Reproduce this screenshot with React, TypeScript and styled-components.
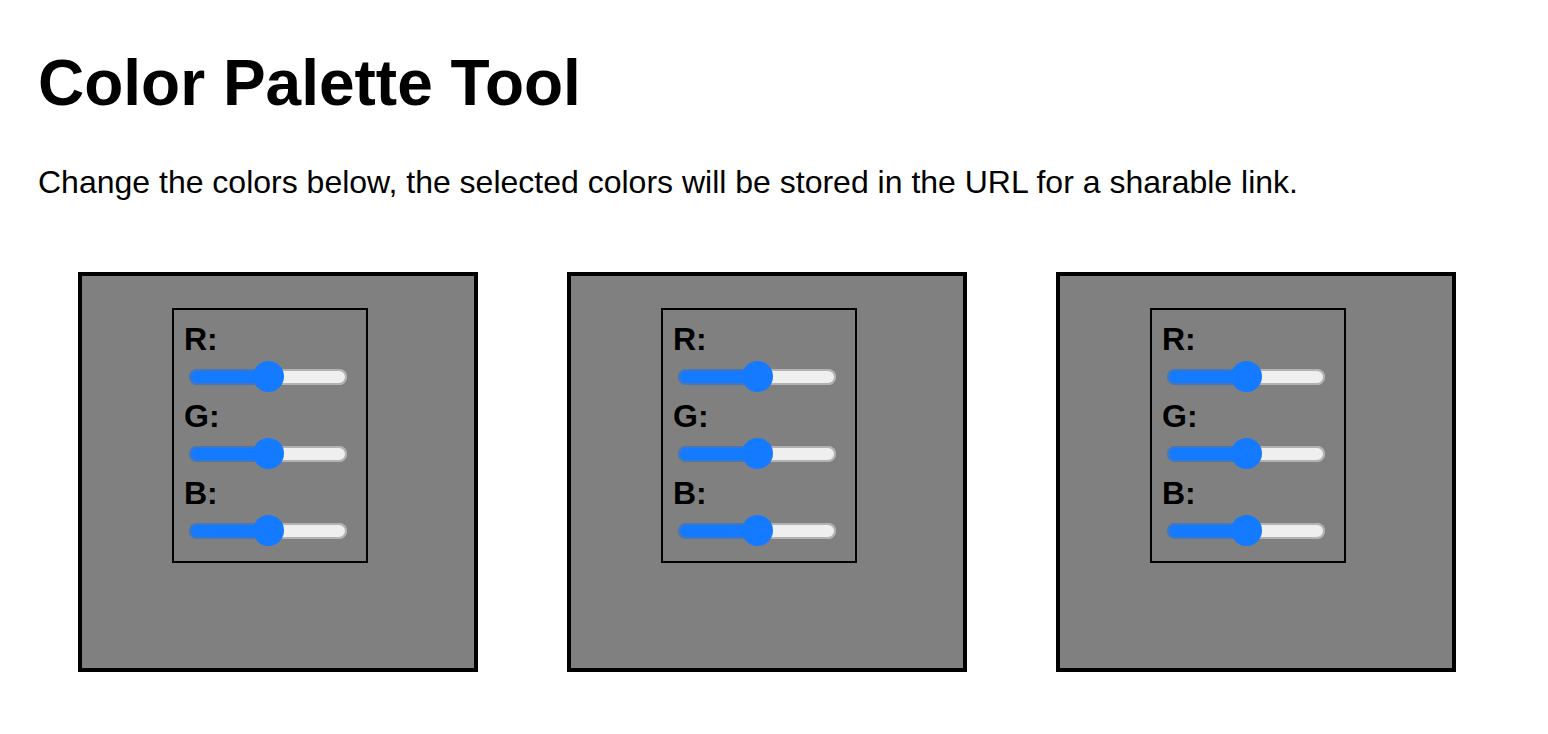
import React, { useState } from "react";
import styled, { createGlobalStyle } from "styled-components";

const GlobalStyle = createGlobalStyle`
  *, *::before, *::after { box-sizing: border-box; }
  body {
    margin: 0;
    background: #fff;
    color: #000;
    font-family: "Liberation Sans", Arial, sans-serif;
    font-size: 32px;
    line-height: 36px;
  }
`;

const Page = styled.main`
  padding: 46px 38px 62px;
`;

const Title = styled.h1`
  margin: 0;
  font-size: 64px;
  line-height: 74px;
  font-weight: 700;
`;

const Intro = styled.p`
  margin: 44px 0 0;
`;

const Palette = styled.section`
  display: flex;
  flex-wrap: wrap;
  gap: 89px;
  margin-top: 72px;
  padding-left: 40px;
`;

const Swatch = styled.article`
  display: flex;
  justify-content: center;
  align-items: flex-start;
  width: 400px;
  height: 400px;
  padding: 32px 16px 0 0;
  border: 4px solid #000;
`;

const Controls = styled.div`
  width: 196px;
  padding: 11px 10px 9px;
  border: 2px solid #000;
`;

const Channel = styled.label`
  display: block;
  height: 77px;
  font-weight: 700;
`;

const Slider = styled.input<{ $fill: number }>`
  appearance: none;
  display: block;
  width: 158px;
  height: 32px;
  margin: 4px 5px;
  background: transparent;

  &::-webkit-slider-runnable-track {
    height: 16px;
    border-radius: 8px;
    box-shadow: inset 0 0 0 2px rgba(117, 117, 117, 0.5);
    background: linear-gradient(
      to right,
      #147aff ${(p) => p.$fill}%,
      #efefef ${(p) => p.$fill}%
    );
  }

  &::-webkit-slider-thumb {
    appearance: none;
    width: 31px;
    height: 31px;
    margin-top: -8px;
    border-radius: 50%;
    background: #147aff;
  }
`;

const channels = ["R", "G", "B"] as const;

function ColorSwatch({ index }: { index: number }) {
  const [rgb, setRgb] = useState([128, 128, 128]);

  return (
    <Swatch style={{ backgroundColor: `rgb(${rgb.join(", ")})` }}>
      <Controls>
        {channels.map((name, i) => (
          <Channel key={name} htmlFor={`color-${index}-${name}`}>
            {name}:
            <Slider
              id={`color-${index}-${name}`}
              type="range"
              min={0}
              max={255}
              value={rgb[i]}
              $fill={Math.round((rgb[i] / 255) * 100)}
              onChange={(e) =>
                setRgb(rgb.map((v, j) => (j === i ? Number(e.target.value) : v)))
              }
            />
          </Channel>
        ))}
      </Controls>
    </Swatch>
  );
}

export default function App() {
  return (
    <Page>
      <GlobalStyle />
      <Title>Color Palette Tool</Title>
      <Intro>
        Change the colors below, the selected colors will be stored in the URL for a sharable link.
      </Intro>
      <Palette>
        {[0, 1, 2].map((index) => (
          <ColorSwatch key={index} index={index} />
        ))}
      </Palette>
    </Page>
  );
}
